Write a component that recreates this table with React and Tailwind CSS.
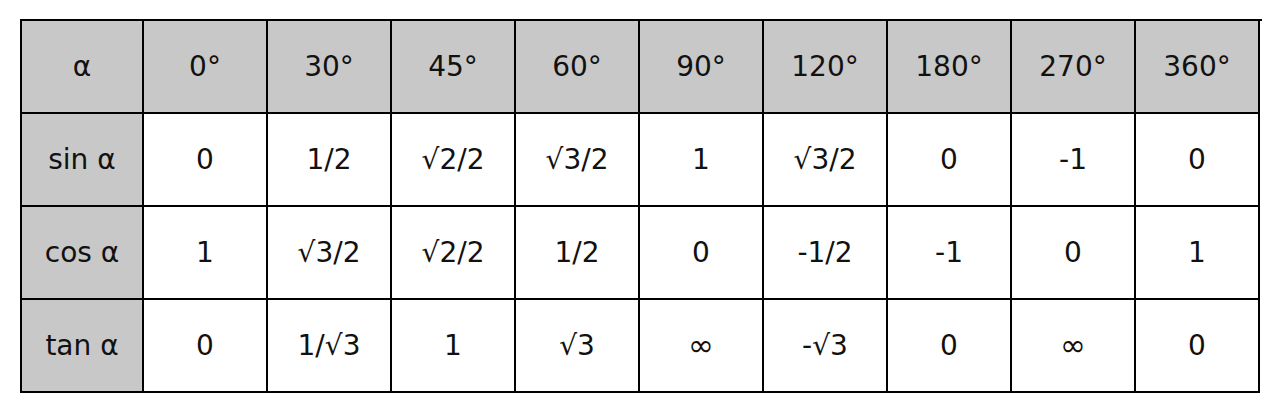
import React from 'react';

const header = ['α', '0°', '30°', '45°', '60°', '90°', '120°', '180°', '270°', '360°'];

const rows = [
  ['sin α', '0', '1/2', '√2/2', '√3/2', '1', '√3/2', '0', '-1', '0'],
  ['cos α', '1', '√3/2', '√2/2', '1/2', '0', '-1/2', '-1', '0', '1'],
  ['tan α', '0', '1/√3', '1', '√3', '∞', '-√3', '0', '∞', '0']
];

const Cell = ({ children, gray }) => (
  <div
    className={
      'flex h-[93px] items-center justify-center border-r-2 border-b-2 border-black ' +
      (gray ? 'bg-[#c8c8c8]' : 'bg-white')
    }>
    {children === '∞' ? <span className="text-[31px]">∞</span> : children}
  </div>
);

const App = () => {
  return (
    <div className="h-[414px] w-[1279px] bg-white pt-[19px] pl-[20px]">
      <div
        className="grid w-[1242px] grid-cols-[122px_repeat(9,124px)] border-t-2 border-l-2 border-black text-[28px] text-[#111]"
        style={{ fontFamily: '"DejaVu Sans", sans-serif' }}>
        {header.map((h, i) => (
          <Cell key={'h' + i} gray>
            {h}
          </Cell>
        ))}
        {rows.map((row, r) =>
          row.map((v, i) => (
            <Cell key={r + '-' + i} gray={i === 0}>
              {v}
            </Cell>
          ))
        )}
      </div>
    </div>
  );
};

export default App;
